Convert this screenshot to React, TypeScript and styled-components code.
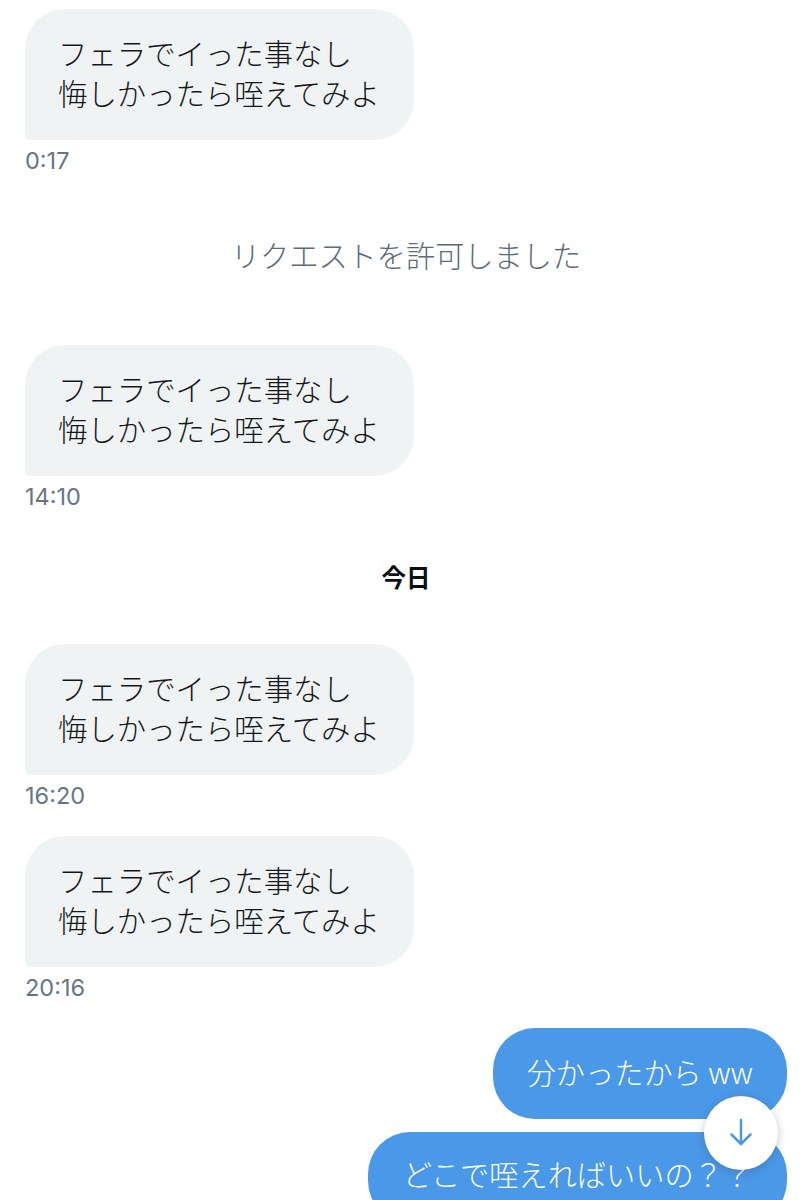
import React from 'react';
import styled, { createGlobalStyle } from 'styled-components';

const GlobalStyle = createGlobalStyle`
  html, body {
    margin: 0;
    height: 1200px;
    overflow: hidden;
    background: #fff;
  }
`;

const Thread = styled.div`
  position: relative;
  width: 812px;
  height: 1200px;
  box-sizing: border-box;
  overflow: hidden;
  padding: 9px 25px 0;
  display: flex;
  flex-direction: column;
  font-family: 'Noto Sans CJK JP', 'Liberation Sans', sans-serif;

  & > * {
    flex-shrink: 0;
  }
`;

const Received = styled.div`
  align-self: flex-start;
  width: 389px;
  box-sizing: border-box;
  height: 131px;
  padding: 23px 0 0 33px;
  background: #f0f3f4;
  border-radius: 40px 40px 40px 5px;
  color: #14171a;
  font-size: 29.4px;
  font-weight: 300;
  line-height: 40px;
  white-space: nowrap;
`;

const Time = styled.div<{ $after: number }>`
  height: 22px;
  margin: 10px 0 ${(p) => p.$after}px;
  color: #657786;
  font-family: Inter, 'Liberation Sans', sans-serif;
  font-size: 23.5px;
  line-height: 22px;
`;

const Notice = styled.div`
  height: 40px;
  margin-bottom: 71px;
  text-align: center;
  color: #5b6b79;
  font-size: 29.2px;
  font-weight: 300;
  line-height: 40px;
`;

const DayLabel = styled.div`
  height: 30px;
  margin-bottom: 52px;
  text-align: center;
  color: #0c0f12;
  font-size: 24.5px;
  font-weight: 700;
  line-height: 30px;
`;

const Sent = styled.div<{ $gap: number; $top: number; $side: number }>`
  align-self: flex-end;
  box-sizing: border-box;
  height: 91px;
  margin-bottom: ${(p) => p.$gap}px;
  padding: ${(p) => p.$top}px ${(p) => p.$side}px 0;
  background: #4a98e8;
  border-radius: 42px;
  color: #fff;
  font-size: 29.2px;
  font-weight: 300;
  line-height: 40px;
  white-space: nowrap;
`;

const ScrollButton = styled.button`
  position: absolute;
  left: 704px;
  top: 1096px;
  width: 74px;
  height: 74px;
  padding: 0 0 3px;
  display: flex;
  align-items: center;
  justify-content: center;
  border: none;
  border-radius: 50%;
  background: #fff;
  color: #4a98e8;
  box-shadow: 0 2px 8px rgba(60, 70, 80, 0.32);
`;

const Message = () => (
  <Received>
    フェラでイった事なし
    <br />
    悔しかったら咥えてみよ
  </Received>
);

export default function App() {
  return (
    <Thread>
      <GlobalStyle />
      <Message />
      <Time $after={62}>0:17</Time>
      <Notice>リクエストを許可しました</Notice>
      <Message />
      <Time $after={54}>14:10</Time>
      <DayLabel>今日</DayLabel>
      <Message />
      <Time $after={29}>16:20</Time>
      <Message />
      <Time $after={29}>20:16</Time>
      <Sent $gap={13} $top={23} $side={34}>分かったから ww</Sent>
      <Sent $gap={0} $top={21} $side={35}>どこで咥えればいいの？？</Sent>
      <ScrollButton>
        <svg width="24" height="28" viewBox="0 0 24 28" fill="none" stroke="currentColor" strokeWidth="2.5" strokeLinecap="round" strokeLinejoin="round">
          <path d="M12 2v24" />
          <path d="M2.5 16.5 12 26l9.5-9.5" />
        </svg>
      </ScrollButton>
    </Thread>
  );
}
